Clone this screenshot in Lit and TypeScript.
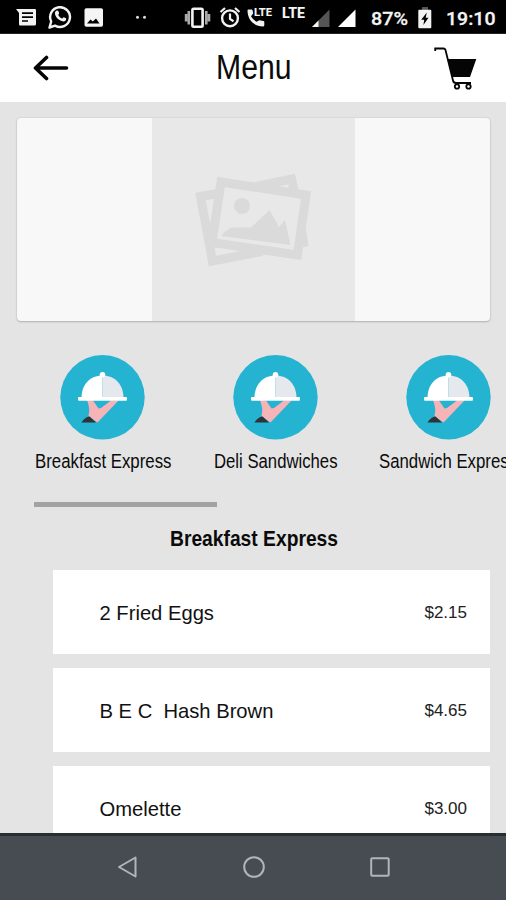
import { LitElement, html, css, svg } from "lit";
import { customElement, property } from "lit/decorators.js";

// Condensed label: glyphs are fitted to an exact width.
@customElement("narrow-text")
class NarrowText extends LitElement {
  @property() text = "";
  @property({ type: Number }) size = 19;
  @property({ type: Number }) fit = 100;
  @property({ type: Boolean }) bold = false;
  static styles = css`
    :host { display: block; flex: none; }
    svg { display: block; overflow: visible; }
    text { font-family: "Liberation Sans", Arial, sans-serif; fill: #0b0b0b; }
    .bold { font-weight: 700; }
  `;
  render() {
    return html`<svg width=${this.fit} height=${this.size}>
      <text class=${this.bold ? "bold" : ""} x="0" y=${this.size * 0.85} font-size=${this.size}
        textLength=${this.fit} lengthAdjust="spacingAndGlyphs">${this.text}</text>
    </svg>`;
  }
}

@customElement("status-bar")
class StatusBar extends LitElement {
  static styles = css`
    :host { display: flex; height: 34px; background: #000; align-items: stretch; overflow: hidden;
      box-sizing: border-box; border-bottom: 1px solid #222; }
    svg { display: block; flex: none; overflow: visible; }
    .msg { margin-left: 15px; }
    .wa { margin-left: 11px; }
    .pic { margin-left: 12px; }
    .dots { margin-left: 31px; }
    .vib { margin-left: 35px; }
    .alarm { margin-left: 8.500px; }
    .call { margin-left: 6.500px; }
    .lte { margin-left: 8.500px; }
    .sig { margin-left: 6px; }
    .sig2 { margin-left: 8px; }
    .pct { margin-left: 15.500px; }
    .bat { margin-left: 10px; }
    .clock { margin-left: 14px; }
    text { font-family: Roboto, sans-serif; font-weight: 500; fill: #f4f4f4; }
    .heavy { font-weight: 800; }
  `;
  render() {
    return html`
      <svg class="msg" width="22" height="34"><path fill="#f2f2f2" d="M1 9H20Q21 9 21 10V24Q21 25.500 19.500 25.500H5Q4 25.500 4 24V13Z"/><path stroke="#000" stroke-width="1.700" d="M7 13.200H18M7 17.200H18M7 21H13"/></svg>
      <svg class="wa" width="24" height="34"><path fill="none" stroke="#f2f2f2" stroke-width="2.400" stroke-linejoin="round" d="M1.500 27.500L3.200 21.500A9.900 9.900 0 1 1 7 25.600Z"/><path fill="#f2f2f2" d="M8.300 10.800C9 10.200 10 10.300 10.300 11L11.100 13C11.300 13.600 10.400 14.300 10.200 14.800C10.900 16.400 12.300 17.900 14.200 18.600C14.800 18.200 15.300 17 15.900 17.200L18 18.300C18.500 18.700 18.100 19.900 17.600 20.500C16.300 21.900 14 21.600 11.500 20.100C8.900 18.500 6.900 15.500 6.900 13.200C7 12.200 7.500 11.300 8.300 10.800Z"/></svg>
      <svg class="pic" width="20" height="34"><rect x=".5" y="8.300" width="18.500" height="18.500" rx="1.800" fill="#f5f5f5"/><path fill="#000" d="M3 23.500L6.500 19.500L8.800 21.500L12 18.500L15.500 23.500Z"/></svg>
      <svg class="dots" width="14" height="34"><circle cx="2.500" cy="17.300" r="1.500" fill="#ddd"/><circle cx="9.500" cy="17.300" r="1.500" fill="#ddd"/></svg>
      <svg class="vib" width="26" height="34"><rect x="8.400" y="8.700" width="10.200" height="18" rx="1.200" fill="none" stroke="#f2f2f2" stroke-width="2.600"/><path stroke="#aaa" stroke-width="2.600" d="M4.800 11V24.500M22.300 11V24.500M2.100 14V21.500M25 14V21.500"/></svg>
      <svg class="alarm" width="22" height="34"><circle cx="11" cy="18.300" r="7.900" fill="none" stroke="#f2f2f2" stroke-width="2.400"/><path fill="none" stroke="#f2f2f2" stroke-width="2.200" d="M1.500 12L6 8M20.500 12L16 8M11 13.500V19L14.500 21.200"/></svg>
      <svg class="call" width="26" height="34"><path fill="#f2f2f2" d="M.5 10.500Q.5 9.500 1.500 9.500H4.500Q5.500 9.500 5.600 10.500L6.200 13.500L4 16.300Q6 20 9.700 21.800L12.300 20.200L16.500 21Q17.300 21.200 17.300 22V25Q17.300 26.500 16 26.500C7 26.500.5 19.500.5 10.500Z"/><text class="heavy" x="7" y="16" font-size="11.500" textLength="18" lengthAdjust="spacingAndGlyphs">LTE</text></svg>
      <svg class="lte" width="24" height="34"><text class="heavy" x="0" y="18" font-size="14" textLength="23" lengthAdjust="spacingAndGlyphs">LTE</text></svg>
      <svg class="sig" width="18" height="34"><path fill="#555" d="M17.500 9.500V27H0Z"/><path fill="#f5f5f5" d="M6.500 20.500V27H0Z"/></svg>
      <svg class="sig2" width="18" height="34"><path fill="#fff" d="M17.500 9.500V27H0Z"/></svg>
      <svg class="pct" width="37" height="34"><text x="0" y="25" font-size="19" stroke="#f4f4f4" stroke-width=".3" textLength="37" lengthAdjust="spacingAndGlyphs">87%</text></svg>
      <svg class="bat" width="14" height="34"><path fill="#555" d="M4 7H10V11H4Z"/><rect x=".3" y="9.700" width="13" height="18.500" rx="1" fill="#f2f2f2"/><path fill="#000" d="M8.800 12.500L3.200 19.800H6.200L5.400 25L10.500 17.700H7.700Z"/></svg>
      <svg class="clock" width="50" height="34"><text x="0" y="25" font-size="19" stroke="#f4f4f4" stroke-width=".3" textLength="49.500" lengthAdjust="spacingAndGlyphs">19:10</text></svg>
    `;
  }
}

const dish = svg`
  <circle cx="42.500" cy="42.300" r="42.200" fill="#25b3d2"/>
  <path fill="#f6b4b8" d="M27 45L33 45.500L38.500 53.500L41 53L51 45.500H58.500L37.500 67.500L28.500 61Q30.500 54 27 45Z"/>
  <path fill="#2e3338" d="M21.500 67.500Q25 62 29.500 61.500L36 67.500Z"/>
  <path fill="#fff" d="M21.500 43C21.500 29.500 30 20.500 42.500 20.500V43Z"/>
  <path fill="#e5e8ec" d="M42.500 20.500C55 20.500 63.500 29.500 63.500 43H42.500Z"/>
  <circle cx="42.500" cy="19.700" r="2.800" fill="#fff"/>
  <rect x="18" y="42" width="49" height="3.700" rx="1" fill="#fff"/>`;

const categories = [
  { name: "Breakfast Express", fit: 136.5 },
  { name: "Deli Sandwiches", fit: 123.5 },
  { name: "Sandwich Express", fit: 138 },
];
const items = [
  { name: "2 Fried Eggs", price: "$2.15" },
  { name: "B E C  Hash Brown", price: "$4.65" },
  { name: "Omelette", price: "$3.00" },
];

@customElement("app-root")
class AppRoot extends LitElement {
  static styles = css`
    :host { display: flex; flex-direction: column; width: 506px; height: 900px; overflow: hidden;
      background: #e4e4e4; font-family: "Liberation Sans", Arial, sans-serif; color: #111; }
    svg { display: block; flex: none; }
    status-bar, header, nav { flex: none; }
    header { height: 68px; background: #fff; display: grid; grid-template-columns: 1fr auto 1fr;
      align-items: center; padding: 0 29px 0 33px; }
    .title { margin: 0 2px 2px 0; }
    .cart { justify-self: end; }
    main { flex: 1; min-height: 0; overflow: hidden; padding-top: 16px; }
    .banner { margin: 0 16px 0 17px; height: 203px; background: #f8f8f8; border-radius: 4px; display: flex;
      justify-content: center; box-shadow: 0 0 2px rgba(0,0,0,.12), 0 1px 2px rgba(0,0,0,.2); }
    .placeholder { width: 203px; height: 203px; background: #e8e8e8; }
    .cats { display: flex; margin: 34px 0 0 16.500px; width: 520px; }
    .cat { flex: none; width: 172.700px; display: flex; flex-direction: column; align-items: center; }
    .cat narrow-text { margin-top: 11px; }
    .bar { width: 183px; height: 5px; background: #a2a2a2; margin: 31.500px 0 0 34px; }
    .heading { display: flex; justify-content: center; margin-top: 19.500px; padding-left: 1px; }
    .list { display: flex; flex-direction: column; gap: 14px; margin: 20.500px 16px 0 53px; }
    .item { height: 84px; box-sizing: border-box; background: #fff; display: flex; justify-content: space-between;
      align-items: center; padding: 3px 23px 0 46.500px; }
    .name { font-size: 20.200px; white-space: pre; }
    .price { font-size: 17px; color: #222; }
    nav { height: 67px; box-sizing: border-box; background: #464c52; border-top: 3px solid #26302f;
      display: flex; align-items: center; justify-content: space-between; padding: 0 115px 2px 116.500px; }
  `;
  render() {
    return html`
      <status-bar></status-bar>
      <header>
        <svg width="36" height="28"><path d="M33.500 14H3M13.500 3.500L2.500 14L13.500 24.500" fill="none" stroke="#050505" stroke-width="3.600" stroke-linecap="round" stroke-linejoin="round"/></svg>
        <narrow-text class="title" text="Menu" size="35.500" fit="75.500"></narrow-text>
        <svg class="cart" width="43" height="44"><path d="M1.200 5V2.500H9.500Q11 2.500 11.500 4L19 34.500Q19.500 37 22 37H37" fill="none" stroke="#050505" stroke-width="1.800"/><path d="M14 13H42.300L36 31H18.300Z" fill="#050505"/><g fill="#fff" stroke="#050505" stroke-width="1.800"><circle cx="23" cy="40.500" r="2.200"/><circle cx="34.500" cy="40.500" r="2.200"/></g></svg>
      </header>
      <main>
        <div class="banner">
          <svg class="placeholder" viewBox="0 0 203 203">
            <g fill="none" stroke="#dadada" stroke-width="9">
              <path d="M66 75.500L48.500 78.500L60.500 143L110 133.500M104 68.500L139.500 61L142 72M149 108L152 129"/>
              <path d="M69 64L154 77L145.500 137L60 124.500Z"/>
            </g>
            <circle cx="90" cy="88" r="8" fill="#dadada"/>
            <path fill="#dadada" d="M69 118Q76 109 83 109.500H99L117.500 92L127 109L133 102L138.500 127Z"/>
          </svg>
        </div>
        <section class="cats">
          ${categories.map((c) => html`<div class="cat">
            <svg width="85" height="85">${dish}</svg>
            <narrow-text text=${c.name} size="19.500" fit=${c.fit}></narrow-text>
          </div>`)}
        </section>
        <div class="bar"></div>
        <div class="heading"><narrow-text text="Breakfast Express" size="22.500" fit="168" bold></narrow-text></div>
        <section class="list">
          ${items.map((i) => html`<div class="item"><span class="name">${i.name}</span><span class="price">${i.price}</span></div>`)}
        </section>
      </main>
      <nav>
        <svg width="22" height="24"><path d="M18.500 2.500V21.500L2 12Z" fill="none" stroke="#b0b5b8" stroke-width="2" stroke-linejoin="round"/></svg>
        <svg width="24" height="24"><circle cx="12" cy="12" r="9.800" fill="none" stroke="#b0b5b8" stroke-width="2"/></svg>
        <svg width="22" height="24"><rect x="2.200" y="3.200" width="17.500" height="17.500" rx="1" fill="none" stroke="#b0b5b8" stroke-width="2"/></svg>
      </nav>`;
  }
}
